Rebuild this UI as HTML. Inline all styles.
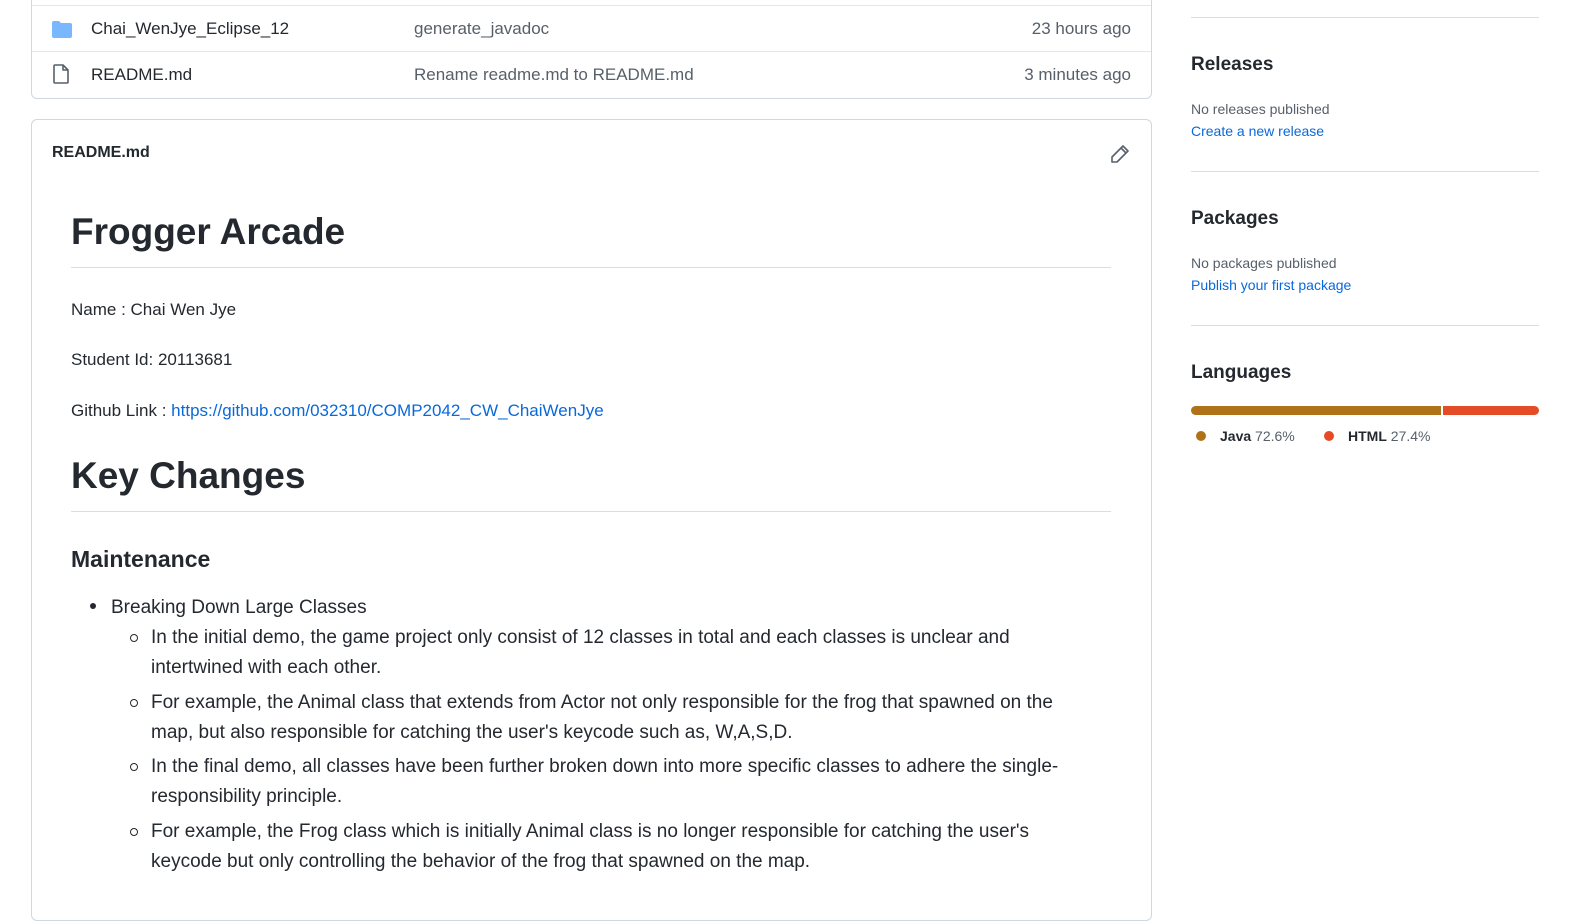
<!DOCTYPE html>
<html><head><meta charset="utf-8"><style>
body{margin:0;width:1580px;height:893px;overflow:hidden;background:#fff;font-family:"Liberation Sans",sans-serif;color:#24292f;position:relative}
.abs{position:absolute;white-space:nowrap}
.box1{position:absolute;left:31px;top:-10px;width:1119px;height:107px;border:1px solid #d0d7de;border-radius:6px}
.sep{position:absolute;left:32px;width:1119px;height:1px;background:#e4e7ea}
.box2{position:absolute;left:31px;top:119px;width:1119px;height:800px;border:1px solid #d0d7de;border-radius:6px}
.f17{font-size:17px}
.gray{color:#57606a}
.hr{position:absolute;left:71px;width:1040px;height:1px;background:#d8dee4}
.side{position:absolute;left:1191px;width:348px;height:1px;background:#d8dee4}
.sh{font-size:19px;font-weight:bold;color:#24292f}
.sm{font-size:14px;color:#57606a}
.lk{font-size:14px;color:#0969da}
.li{font-size:19px;line-height:30px}
.dot{position:absolute;width:10px;height:10px;border-radius:50%}
.circ{position:absolute;left:130px;width:6px;height:6px;border:1.3px solid #24292f;border-radius:50%}
</style></head><body>
<div class="box1"></div>
<div class="sep" style="top:5px"></div>
<div class="sep" style="top:51px"></div>
<svg class="abs" style="left:51px;top:20px" width="22" height="19" viewBox="0 0 22 19"><path d="M1 3a2 2 0 0 1 2-2h5l2 2h9a2 2 0 0 1 2 2v11a2 2 0 0 1-2 2H3a2 2 0 0 1-2-2z" fill="#79b8ff"/></svg>
<svg class="abs" style="left:53px;top:64px" width="16" height="20" viewBox="0 0 16 20"><path d="M2 1h8l5 5v12a1 1 0 0 1-1 1H2a1 1 0 0 1-1-1V2a1 1 0 0 1 1-1zM10 1v5h5" fill="none" stroke="#57606a" stroke-width="1.6" stroke-linejoin="round"/></svg>
<div class="abs f17" style="left:91px;top:19px">Chai_WenJye_Eclipse_12</div>
<div class="abs f17 gray" style="left:414px;top:19px">generate_javadoc</div>
<div class="abs f17 gray" style="right:449px;top:19px">23 hours ago</div>
<div class="abs f17" style="left:91px;top:65px">README.md</div>
<div class="abs f17 gray" style="left:414px;top:65px">Rename readme.md to README.md</div>
<div class="abs f17 gray" style="right:449px;top:65px">3 minutes ago</div>

<div class="box2"></div>
<div class="abs" style="left:52px;top:144px;font-weight:bold;font-size:16px">README.md</div>
<svg class="abs" style="left:1110px;top:144px" width="20" height="20" viewBox="0 0 20 20"><path d="M13 2l5 5L7 18H2v-5z M11 4l5 5" fill="none" stroke="#57606a" stroke-width="1.6" stroke-linejoin="round"/></svg>
<div class="abs" style="left:71px;top:211px;font-size:37px;font-weight:bold">Frogger Arcade</div>
<div class="hr" style="top:267px"></div>
<div class="abs" style="left:71px;top:300px;font-size:17px">Name : Chai Wen Jye</div>
<div class="abs" style="left:71px;top:350px;font-size:17px">Student Id: 20113681</div>
<div class="abs" style="left:71px;top:401px;font-size:17px">Github Link : <span style="color:#0969da">https://github.com/032310/COMP2042_CW_ChaiWenJye</span></div>
<div class="abs" style="left:71px;top:455px;font-size:37px;font-weight:bold">Key Changes</div>
<div class="hr" style="top:511px"></div>
<div class="abs" style="left:71px;top:546px;font-size:23px;font-weight:bold">Maintenance</div>
<div class="abs" style="left:90px;top:603px;width:6px;height:6px;background:#24292f;border-radius:50%"></div>
<div class="abs li" style="left:111px;top:593px">Breaking Down Large Classes</div>
<div class="circ" style="top:634px"></div>
<div class="abs li" style="left:151px;top:623px">In the initial demo, the game project only consist of 12 classes in total and each classes is unclear and</div>
<div class="abs li" style="left:151px;top:653px">intertwined with each other.</div>
<div class="circ" style="top:699px"></div>
<div class="abs li" style="left:151px;top:688px">For example, the Animal class that extends from Actor not only responsible for the frog that spawned on the</div>
<div class="abs li" style="left:151px;top:718px">map, but also responsible for catching the user's keycode such as, W,A,S,D.</div>
<div class="circ" style="top:763px"></div>
<div class="abs li" style="left:151px;top:752px">In the final demo, all classes have been further broken down into more specific classes to adhere the single-</div>
<div class="abs li" style="left:151px;top:782px">responsibility principle.</div>
<div class="circ" style="top:828px"></div>
<div class="abs li" style="left:151px;top:817px">For example, the Frog class which is initially Animal class is no longer responsible for catching the user's</div>
<div class="abs li" style="left:151px;top:847px">keycode but only controlling the behavior of the frog that spawned on the map.</div>

<div class="side" style="top:17px"></div>
<div class="abs sh" style="left:1191px;top:54px">Releases</div>
<div class="abs sm" style="left:1191px;top:101px">No releases published</div>
<div class="abs lk" style="left:1191px;top:123px">Create a new release</div>
<div class="side" style="top:171px"></div>
<div class="abs sh" style="left:1191px;top:208px">Packages</div>
<div class="abs sm" style="left:1191px;top:255px">No packages published</div>
<div class="abs lk" style="left:1191px;top:277px">Publish your first package</div>
<div class="side" style="top:325px"></div>
<div class="abs sh" style="left:1191px;top:362px">Languages</div>
<div class="abs" style="left:1191px;top:406px;width:250px;height:9px;background:#b07219;border-radius:5px 0 0 5px"></div>
<div class="abs" style="left:1443px;top:406px;width:96px;height:9px;background:#e34c26;border-radius:0 5px 5px 0"></div>
<div class="dot" style="left:1196px;top:431px;background:#b07219"></div>
<div class="abs" style="left:1220px;top:428px;font-size:14px"><b>Java</b> <span class="gray">72.6%</span></div>
<div class="dot" style="left:1324px;top:431px;background:#e34c26"></div>
<div class="abs" style="left:1348px;top:428px;font-size:14px"><b>HTML</b> <span class="gray">27.4%</span></div>
</body></html>
